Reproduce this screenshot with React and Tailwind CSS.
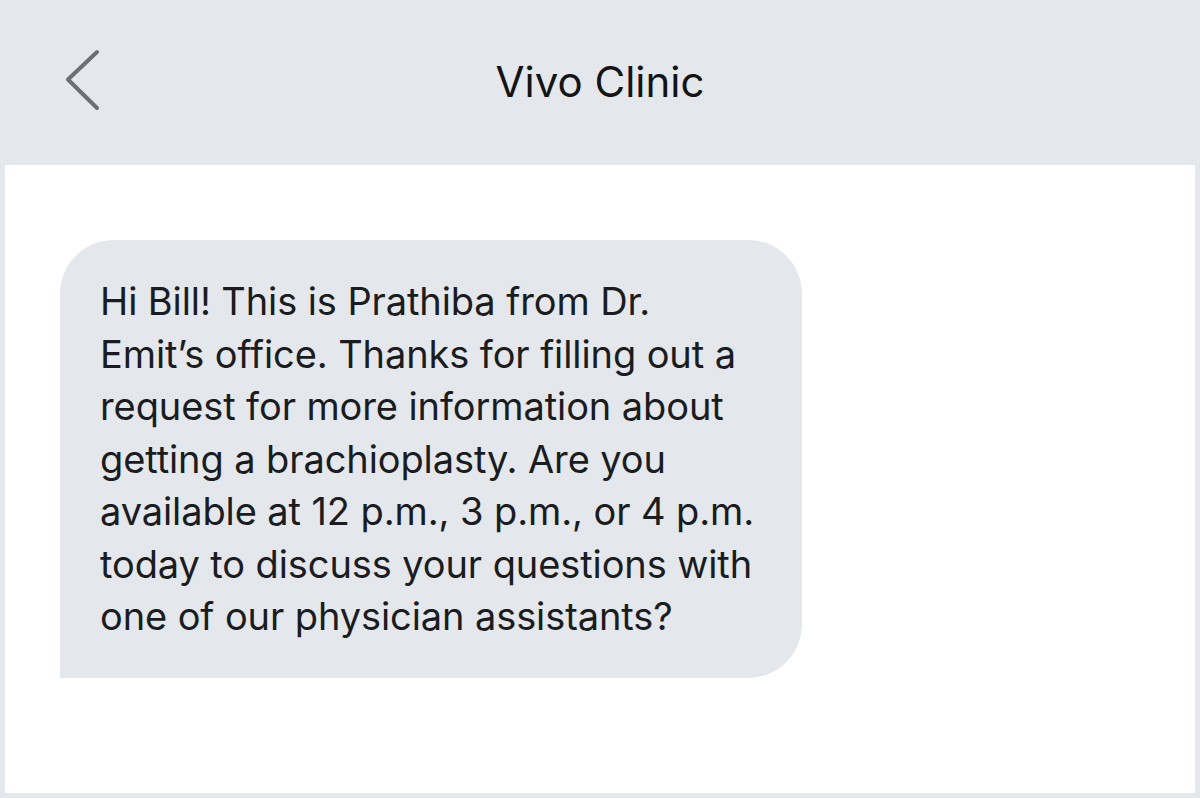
import React from "react";

const lines = [
  "Hi Bill! This is Prathiba from Dr.",
  "Emit\u2019s office. Thanks for filling out a",
  "request for more information about",
  "getting a brachioplasty. Are you",
  "available at 12 p.m., 3 p.m., or 4 p.m.",
  "today to discuss your questions with",
  "one of our physician assistants?",
];

export default function App() {
  return (
    <div
      className="w-[1200px] h-[798px] bg-[#e4e7eb] flex flex-col px-[5px] pb-[5px]"
      style={{ fontFamily: 'Inter, "Liberation Sans", Arial, sans-serif' }}
    >
      {/* Barra superior */}
      <header className="h-[165px] shrink-0 relative flex items-center justify-center">
        <svg
          className="absolute left-[55px] top-[44px]"
          width="40"
          height="70"
          viewBox="0 0 40 70"
          fill="none"
        >
          <path
            d="M37 8 L8 35.5 L37 64"
            stroke="#6b6f76"
            strokeWidth="4"
            strokeLinecap="round"
            strokeLinejoin="round"
          />
        </svg>
        <h1 className="text-[42px] text-[#141414] leading-none -mt-[2px]">Vivo Clinic</h1>
      </header>

      {/* Conversación */}
      <main className="flex-1 bg-white pt-[75px] pl-[55px]">
        <div className="w-[742px] bg-[#e4e7eb] rounded-t-[54px] rounded-br-[54px] pl-[40px] pr-[20px] py-[35px]">
          {lines.map((line) => (
            <p
              key={line}
              className="whitespace-nowrap text-[38px] leading-[52.5px] tracking-[-0.1px] text-[#1a1c20]"
            >
              {line}
            </p>
          ))}
        </div>
      </main>
    </div>
  );
}
